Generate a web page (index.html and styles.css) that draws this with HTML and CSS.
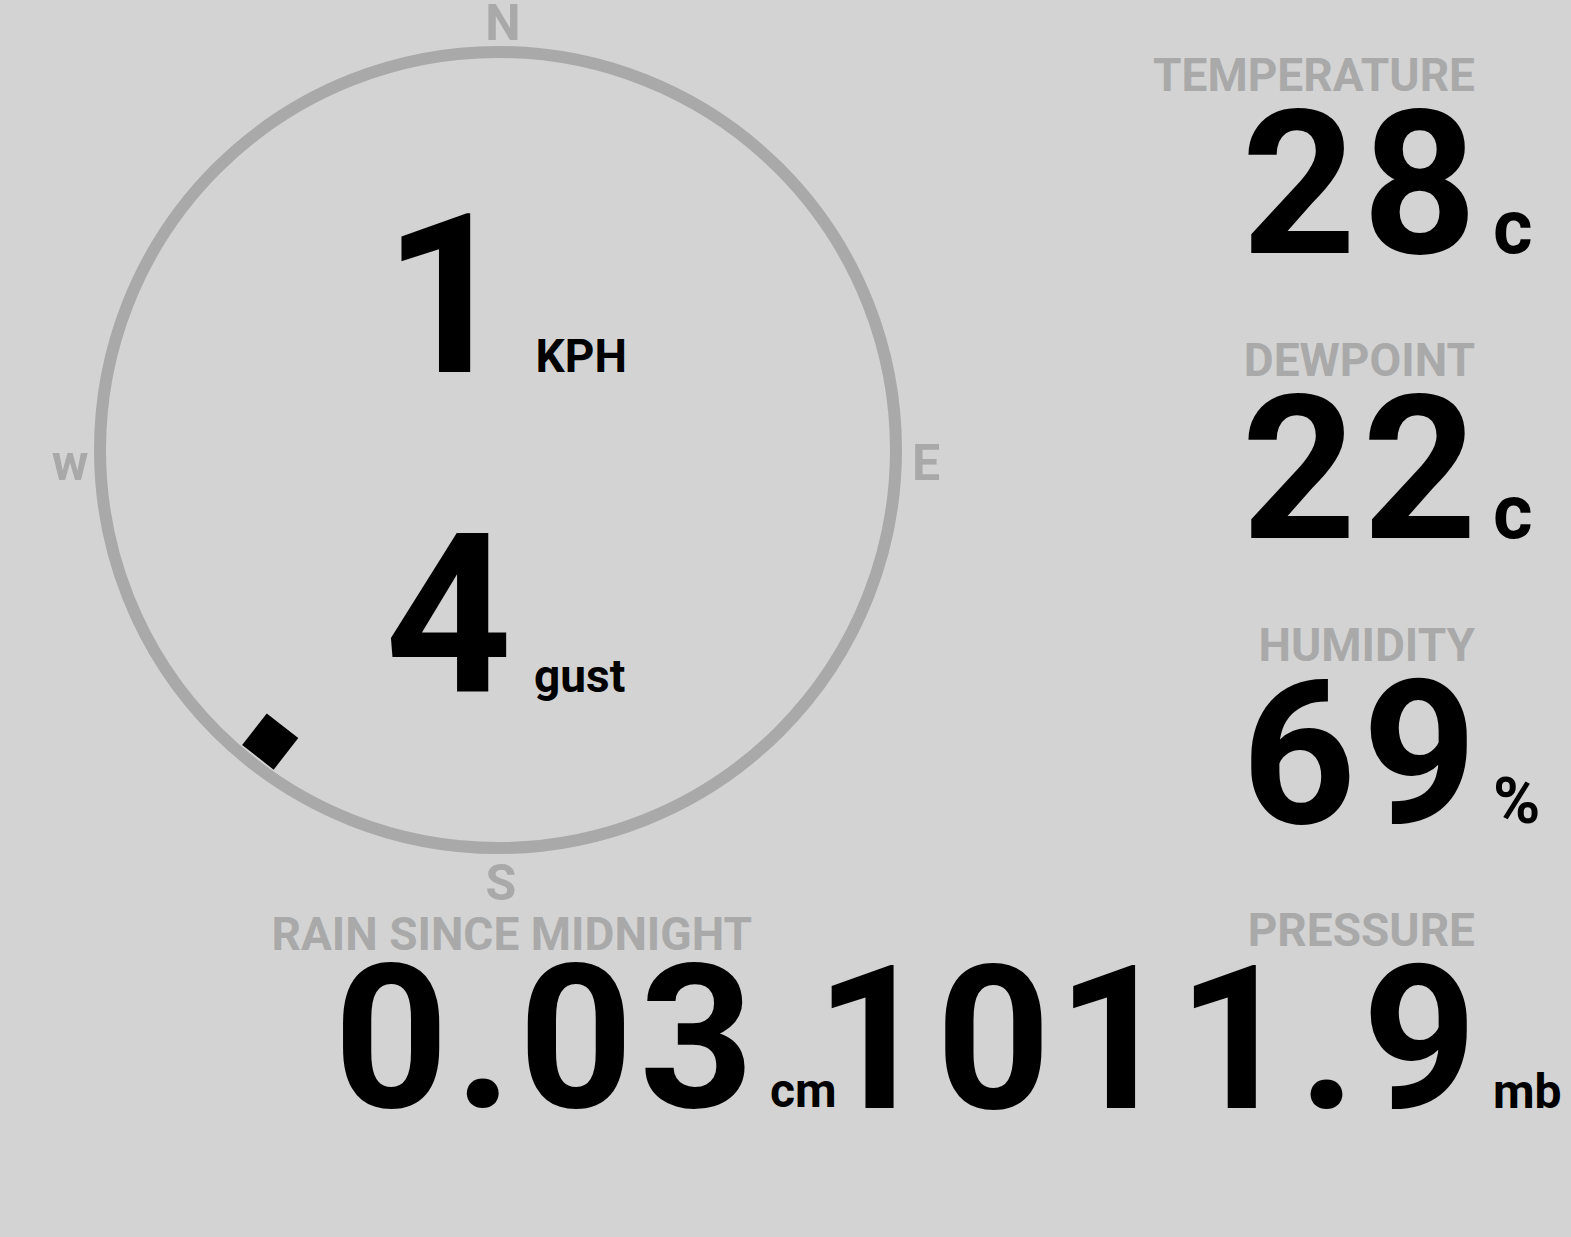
FILE: index.html
```html
<!DOCTYPE html>
<html lang="en">

<head>
    <meta charset="UTF-8">
    <meta name="viewport" content="width=device-width, initial-scale=1.0">
    <title>Weather</title>
    <link rel="stylesheet" href="styles.css">
</head>

<body>
    <div class="tablero">
        <div class="izquierda">
            <div class="brujula">
                <svg class="rosa" width="996" height="911" viewBox="0 0 996 911">
                    <circle cx="498" cy="450" r="398" fill="none" stroke="#a9a9a9" stroke-width="12" />
                    <text class="punto" x="503" y="40" text-anchor="middle">N</text>
                    <text class="punto" x="926" y="480" text-anchor="middle">E</text>
                    <text class="punto" x="501" y="900" text-anchor="middle">S</text>
                    <text class="punto" x="70" y="480" text-anchor="middle">w</text>
                    <!-- direccion del viento -->
                    <g transform="translate(498 450) rotate(218)">
                        <rect x="-20" y="-390" width="40" height="40" fill="#000" />
                    </g>
                </svg>
                <div class="viento">
                    <div class="fila"><span class="velocidad">1</span><span class="unidadViento">KPH</span></div>
                    <div class="fila"><span class="velocidad">4</span><span class="unidadViento gust">gust</span></div>
                </div>
            </div>
            <div class="dato lluvia">
                <div class="etiqueta">RAIN SINCE MIDNIGHT</div>
                <div class="valor"><span class="num">0.03</span><span class="unidad">cm</span></div>
            </div>
        </div>

        <div class="derecha">
            <div class="dato">
                <div class="etiqueta">TEMPERATURE</div>
                <div class="valor"><span class="num">28</span><span class="unidad grande">c</span></div>
            </div>
            <div class="dato">
                <div class="etiqueta">DEWPOINT</div>
                <div class="valor"><span class="num">22</span><span class="unidad grande">c</span></div>
            </div>
            <div class="dato">
                <div class="etiqueta">HUMIDITY</div>
                <div class="valor"><span class="num">69</span><span class="unidad medio">%</span></div>
            </div>
            <div class="dato">
                <div class="etiqueta">PRESSURE</div>
                <div class="valor"><span class="num">1011.9</span><span class="unidad">mb</span></div>
            </div>
        </div>
    </div>
</body>

</html>
```

FILE: styles.css
```css
* {
    margin: 0;
    padding: 0;
    box-sizing: border-box;
}

body {
    background-color: #d3d3d3;
    color: black;
    font-family: Roboto, "Liberation Sans", sans-serif;
    font-weight: 700;
}

.tablero {
    display: flex;
    padding-right: 96px;
}

.izquierda {
    width: 996px;
    flex-shrink: 0;
    display: flex;
    flex-direction: column;
}

.brujula {
    display: grid;
    height: 911px;
}

.rosa,
.viento {
    grid-area: 1 / 1;
}

.punto {
    font-family: Roboto, "Liberation Sans", sans-serif;
    font-weight: 700;
    font-size: 50px;
    fill: #a9a9a9;
}

.viento {
    display: flex;
    flex-direction: column;
    justify-content: center;
    align-items: center;
    gap: 98px;
    padding-left: 14px;
}

.fila {
    white-space: nowrap;
}

.velocidad {
    font-size: 222px;
    line-height: 1;
}

.unidadViento {
    font-size: 46px;
    line-height: 1;
    margin-left: 25px;
}

.gust {
    margin-left: 22px;
}

.derecha {
    flex: 1;
    min-width: 0;
    display: flex;
    flex-direction: column;
    align-items: flex-end;
    gap: 72px;
    padding-top: 52px;
}

.dato {
    text-align: right;
}

.etiqueta {
    font-size: 46px;
    line-height: 1;
    color: #a9a9a9;
    white-space: nowrap;
}

.valor {
    font-size: 200px;
    line-height: 160px;
    margin-top: 7px;
    white-space: nowrap;
}

.num {
    letter-spacing: 6px;
    margin-right: -8px;
}

.unidad {
    display: inline-block;
    width: 0;
    text-indent: 18px;
    text-align: left;
    font-size: 48px;
    line-height: 1;
    white-space: nowrap;
}

.unidad.grande {
    font-size: 76px;
}

.unidad.medio {
    font-size: 64px;
}

.lluvia {
    width: 752px;
}

.lluvia .valor {
    margin-top: 2px;
}
```
